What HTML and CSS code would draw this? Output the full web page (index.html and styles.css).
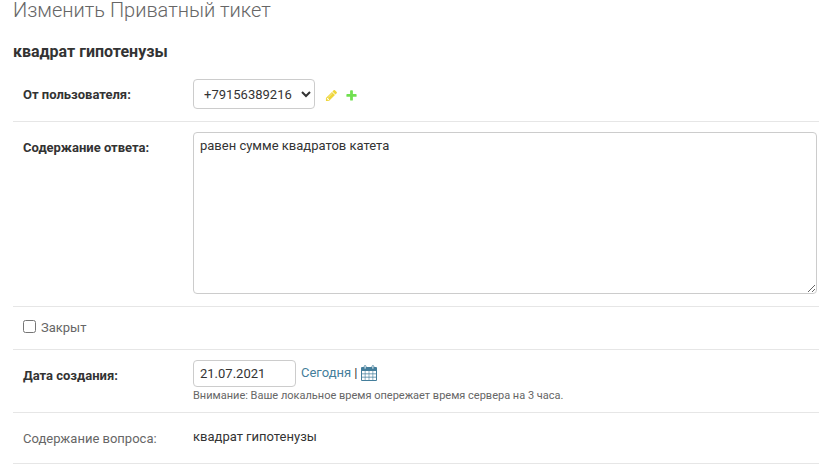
FILE: index.html
```html
<!DOCTYPE html>
<html lang="ru">
<head>
<meta charset="utf-8">
<title>Изменить Приватный тикет</title>
<link rel="stylesheet" href="styles.css">
</head>
<body>
<main class="content">
  <h1>Изменить Приватный тикет</h1>
  <h2>квадрат гипотенузы</h2>
  <form>
    <div class="row row-user">
      <label class="name required" for="user">От пользователя:</label>
      <select id="user"><option>+79156389216</option></select>
      <a class="icon change" href="#"><svg width="13" height="13" viewBox="0 0 1792 1792"><path d="M491 1536l91-91-235-235-91 91v107h128v128h107zm523-928q0-22-22-22-10 0-17 7l-542 542q-7 7-7 17 0 22 22 22 10 0 17-7l542-542q7-7 7-17zm-54-192l416 416-832 832h-416v-416zm683 96q0 53-37 90l-166 166-416-416 166-165q36-38 90-38 53 0 91 38l235 234q37 39 37 91z"/></svg></a>
      <a class="icon add" href="#"><svg width="13" height="13" viewBox="0 0 1792 1792"><path d="M1600 796v192q0 40-28 68t-68 28h-416v416q0 40-28 68t-68 28h-192q-40 0-68-28t-28-68v-416h-416q-40 0-68-28t-28-68v-192q0-40 28-68t68-28h416v-416q0-40 28-68t68-28h192q40 0 68 28t28 68v416h416q40 0 68 28t28 68z"/></svg></a>
    </div>
    <div class="row row-answer">
      <label class="name required" for="answer">Содержание ответа:</label>
      <textarea id="answer" spellcheck="false">равен сумме квадратов катета</textarea>
    </div>
    <div class="row row-closed">
      <input type="checkbox" id="closed">
      <label for="closed">Закрыт</label>
    </div>
    <div class="row row-date">
      <label class="name required" for="date">Дата создания:</label>
      <div>
        <div class="date-line">
          <input type="text" id="date" value="21.07.2021">
          <span class="shortcuts"><a href="#">Сегодня</a> <span class="separator">|</span></span>
          <a class="calendar" href="#"><svg width="16" height="16" viewBox="0 0 16 16"><path fill-rule="evenodd" d="M1 2h14q1 0 1 1v12q0 1-1 1H1q-1 0-1-1V3q0-1 1-1zM1 6v2.600h2.800V6zM4.400 6v2.600h3.300V6zM8.300 6v2.600h3.300V6zM12.200 6v2.600H15V6zM1 9.200v2.600h2.800V9.200zM4.400 9.200v2.600h3.300V9.200zM8.300 9.200v2.600h3.300V9.200zM12.200 9.200v2.600H15V9.200zM1 12.400V15h2.800v-2.600zM4.400 12.400V15h3.300v-2.600zM8.300 12.400V15h3.300v-2.600zM12.200 12.400V15H15v-2.600z"/><g class="rings"><rect x="3.200" y=".5" width="1.800" height="3.600" rx=".9"/><rect x="11" y=".5" width="1.800" height="3.600" rx=".9"/></g></svg></a>
        </div>
        <div class="warning">Внимание: Ваше локальное время опережает время сервера на 3 часа.</div>
      </div>
    </div>
    <div class="row row-question">
      <span class="name">Содержание вопроса:</span>
      <span class="readonly">квадрат гипотенузы</span>
    </div>
  </form>
</main>
</body>
</html>
```
FILE: styles.css
```css
* { box-sizing: border-box; }
body {
  margin: 0;
  background: #fff;
  color: #333;
  font: 13px/15px Roboto, "Liberation Sans", sans-serif;
}
.content { padding-left: 13px; }
h1 {
  margin: 0;
  height: 42px;
  font-size: 20px;
  line-height: 20px;
  font-weight: 300;
  color: #666;
}
h2 {
  margin: 0;
  height: 27px;
  font-size: 16px;
  line-height: 20px;
  font-weight: 700;
}
.row {
  display: flex;
  align-items: flex-start;
  padding: 10px 2px 0 10px;
  border-bottom: 1px solid #e6e6e6;
}
.row-user { height: 53px; }
.row-answer { height: 185px; }
.row-closed { height: 43px; }
.row-date { height: 63px; }
.row-question { height: 51px; }
label, .name { color: #666; }
.name { flex: none; width: 170px; padding-top: 8px; }
.required { font-weight: 700; color: #333; }
select, textarea, input[type="text"] {
  margin: 0;
  border: 1px solid #ccc;
  border-radius: 4px;
  background: #fff;
  color: #333;
  font: 13px/15px Roboto, "Liberation Sans", sans-serif;
}
select { width: 122px; height: 30px; padding: 0 6px; }
.icon { display: block; height: 13px; margin-top: 10px; }
.icon svg, .calendar svg { display: block; }
.change { margin-left: 10px; fill: #efd63b; }
.add { margin-left: 7px; fill: #70e050; }
textarea { width: 624px; height: 162px; padding: 5px 6px; }
input[type="checkbox"] { width: 13px; height: 13px; margin: 3px 5px 0 0; }
.row-closed label { padding-top: 3px; }
.date-line { display: flex; align-items: flex-start; }
input[type="text"] { width: 103px; height: 27px; padding: 0 6px; }
.shortcuts { margin: 5px 0 0 5px; color: #447e9b; }
.shortcuts a { color: #447e9b; text-decoration: none; }
.separator { color: #333; }
.calendar { margin: 5px 0 0 3px; fill: #447e9b; }
.rings { fill: #fff; stroke: #447e9b; stroke-width: .8; }
.warning { margin-top: 2px; font-size: 11px; line-height: 14px; color: #666; }
.readonly { padding-top: 6px; }
```
